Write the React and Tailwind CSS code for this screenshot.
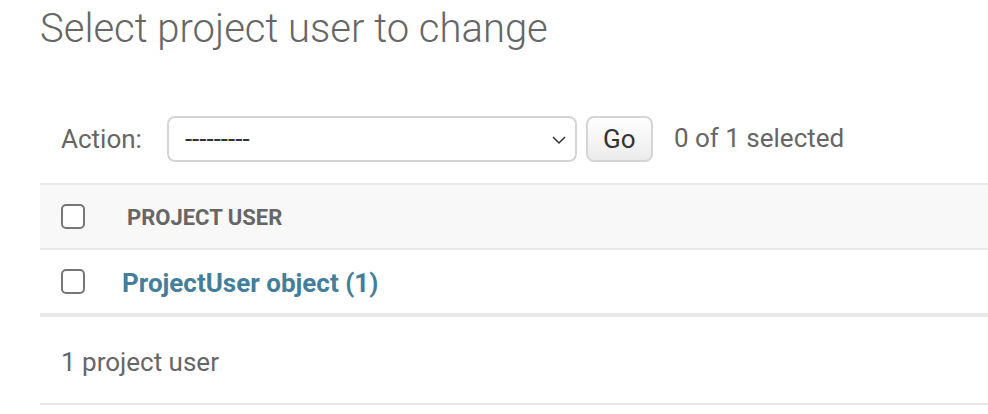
import { useState } from "react";

function Box({ checked, onClick }) {
  return (
    <span
      onClick={onClick}
      className={`block h-[25px] w-[24px] shrink-0 cursor-pointer rounded-[5px] border-2 border-[#767676] ${checked ? "bg-[#447e9b]" : "bg-white"}`}
    />
  );
}

export default function App() {
  const [picked, setPicked] = useState(false);
  const [all, setAll] = useState(false);
  const count = picked || all ? 1 : 0;

  return (
    <main className="min-h-screen bg-white pl-10 font-['Roboto',sans-serif] text-[#333]">
      <h1 className="pt-[5px] text-[40px] font-light leading-[48px] text-[#666]">
        Select project user to change
      </h1>

      <form className="mt-[63px] flex h-[46px] items-center">
        <label className="ml-[21px] text-[26px] leading-none text-[#666]">Action:</label>
        <div className="relative ml-[25px] flex h-[46px] w-[410px] items-center rounded-[8px] border-2 border-[#d5d5d5] bg-white pl-[16px] text-[26px] leading-none text-[#333]">
          ---------
          <svg
            className="absolute right-[9px] top-[17px]"
            width="14"
            height="10"
            viewBox="0 0 14 10"
            fill="none"
            stroke="#333"
            strokeWidth="1.5"
          >
            <path d="M1 2l6 6 6-6" />
          </svg>
        </div>
        <button
          type="button"
          className="ml-[9px] h-[46px] w-[67px] rounded-[8px] border-2 border-[#d5d5d5] bg-gradient-to-b from-white to-[#ebebeb] text-[26px] leading-none text-[#333]"
        >
          Go
        </button>
        <span className="ml-[21px] -mt-[2px] text-[26px] leading-none text-[#666]">
          {count} of 1 selected
        </span>
      </form>

      <section className="mt-[21px]">
        <div className="flex h-[67px] items-center border-y-2 border-[#e8e8e8] bg-[#f8f8f8] pl-[21px]">
          <Box checked={all} onClick={() => setAll((a) => !a)} />
          <span className="ml-[42px] mt-[2px] text-[22px] font-bold uppercase leading-none text-[#666]">
            Project user
          </span>
        </div>
        <div className="flex h-[65px] items-center border-b-2 border-[#e8e8e8] pl-[21px]">
          <Box checked={picked} onClick={() => setPicked((p) => !p)} />
          <a href="#" className="ml-[37px] mt-[3px] text-[26px] font-bold leading-none text-[#447e9b]">
            ProjectUser object (1)
          </a>
        </div>
        <div className="flex h-[90px] items-center border-y-2 border-[#e8e8e8] pl-[21px] pt-[4px] text-[26px] leading-none text-[#666]">
          1 project user
        </div>
      </section>
    </main>
  );
}
